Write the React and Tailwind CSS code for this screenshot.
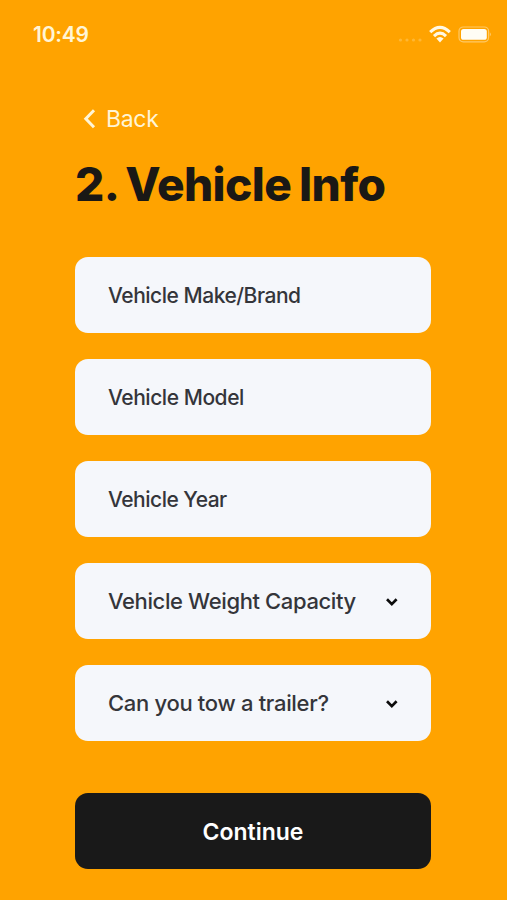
function Arrow() {
  return (
    <svg width="14" height="10" viewBox="0 0 14 10" fill="none" className="shrink-0">
      <path d="M2 2.3 L6.8 7.1 L11.6 2.3" stroke="#0c0c0c" strokeWidth="2.7" />
    </svg>
  );
}

function StatusIcons() {
  return (
    <svg width="98" height="24" viewBox="0 0 98 24" fill="none">
      <g fill="#ffb733">
        <circle cx="7.5" cy="17" r="1.6" />
        <circle cx="14" cy="17" r="1.6" />
        <circle cx="20.5" cy="17" r="1.6" />
        <circle cx="27" cy="17" r="1.6" />
      </g>
      <g stroke="#fff8e5" strokeWidth="3.1">
        <path d="M37.2 9.2 Q47 -0.4 56.8 9.2" />
        <path d="M41 13.1 Q47 7.3 53 13.1" />
      </g>
      <path d="M43.4 15.5 Q47 12.4 50.6 15.5 L47 19.4 Z" fill="#fff8e5" />
      <rect x="66" y="4" width="29.6" height="14.8" rx="4.3" stroke="#ffc966" strokeWidth="1.2" />
      <rect x="68" y="6" width="25.8" height="10.8" rx="2.6" fill="#fffdf5" />
      <path d="M96.8 9.2 Q99 11.4 96.8 13.6 Z" fill="#ffc966" />
    </svg>
  );
}

const fields = [
  { label: "Vehicle Make/Brand", style: "text-[21px] tracking-[-0.48px]" },
  { label: "Vehicle Model", style: "text-[21px] tracking-[-0.46px]" },
  { label: "Vehicle Year", style: "text-[21px] tracking-[-0.5px]" },
  { label: "Vehicle Weight Capacity", select: true, style: "text-[22px] tracking-[-0.38px]" },
  { label: "Can you tow a trailer?", select: true, style: "text-[22px] tracking-[-0.31px]" },
];

export default function App() {
  return (
    <div className="h-[900px] w-[507px] overflow-hidden bg-[#ffa300] font-['Inter',sans-serif]">
      <header className="flex h-[69px] items-center justify-between pl-[33px] pr-[16px] text-[#fff5d6]">
        <span className="text-[21px] font-semibold tracking-[-0.2px]">10:49</span>
        <StatusIcons />
      </header>
      <main className="pl-[75px] pr-[76px]">
        <button className="mt-[33px] flex h-[34px] items-center pl-[8px] text-[23px] tracking-[-0.3px] text-[#fff5d6]">
          <svg width="14" height="22" viewBox="0 0 14 22" fill="none" className="mr-[9px]">
            <path d="M11 2.3 L2.8 10.8 L11 19.3" stroke="currentColor" strokeWidth="3" />
          </svg>
          Back
        </button>
        <h1 className="mt-[19px] h-[58px] whitespace-nowrap text-[46px] font-extrabold leading-[58px] tracking-[-0.6px] [word-spacing:-1.7px] text-[#1a1815]">2. Vehicle Info</h1>
        <form className="mt-[44px] flex flex-col gap-[26px]">
          {fields.map((f) => (
            <div key={f.label} className="flex h-[76px] items-center justify-between rounded-[13px] bg-[#f5f7fb] pl-[33px] pr-[32px] pt-px font-medium text-[#34353a]">
              <span className={f.style}>{f.label}</span>
              {f.select && <Arrow />}
            </div>
          ))}
          <button type="button" className="mt-[26px] h-[76px] rounded-[13px] bg-[#191919] pt-[2px] text-[23px] font-semibold text-white">Continue</button>
        </form>
      </main>
    </div>
  );
}
